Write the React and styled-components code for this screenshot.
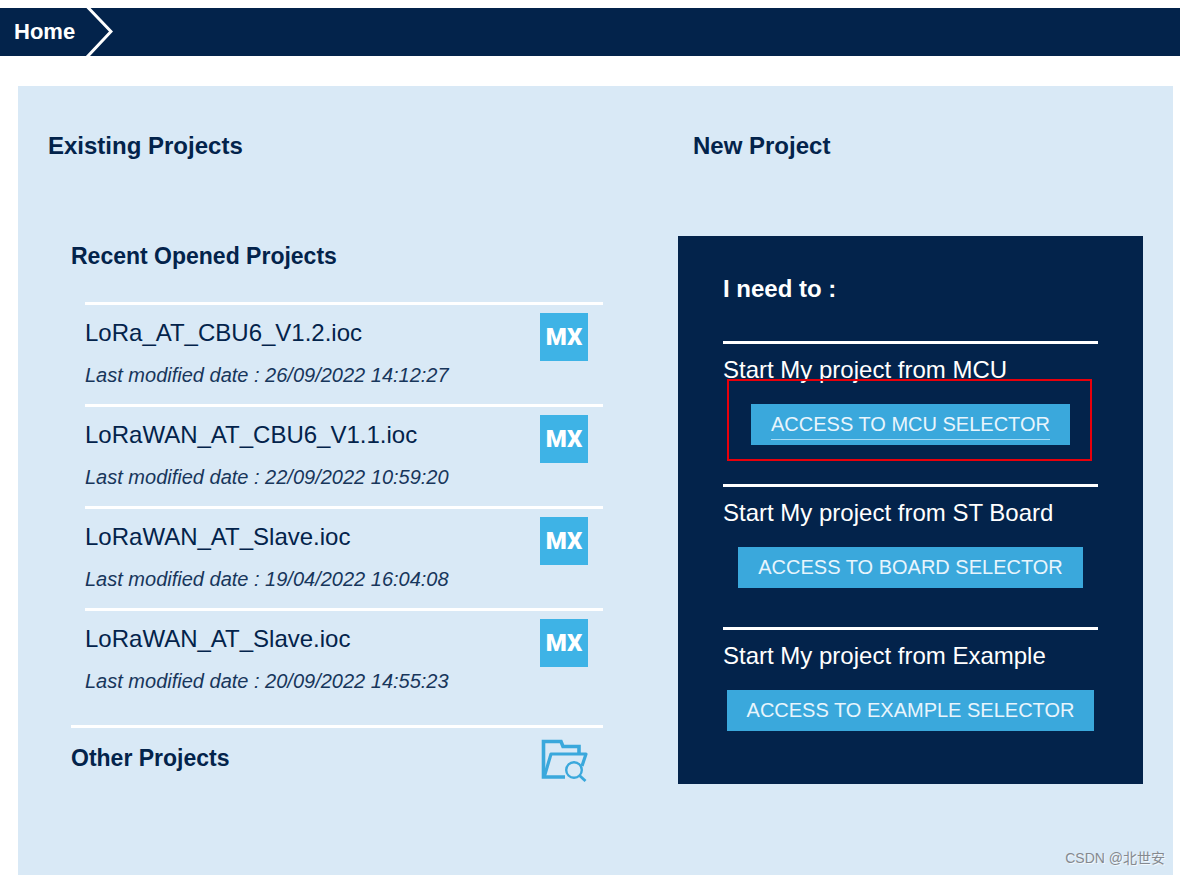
import React from 'react';
import styled, { createGlobalStyle } from 'styled-components';

const navy = '#03234b';
const sky = '#3aa8dc';
const pale = '#d9e9f6';

const GlobalStyle = createGlobalStyle`
    *{
        box-sizing:border-box;
    }
    body{
        margin:0;
        background:white;
        color:${navy};
        font-family:"Liberation Sans", Arial, sans-serif;
        font-size:24px;
    }
    h1, h2, h3, p, ul{
        margin:0;
        padding:0;
        font-size:inherit;
    }
`

const Page = styled.div`
    position:relative;
    min-height:100vh;
    display:flex;
    flex-direction:column;
    padding-top:8px;
`

const TopBar = styled.nav`
    display:flex;
    align-items:center;
    height:48px;
    padding-left:14px;
    gap:10px;
    background:${navy};
    svg{
        display:block;
    }
`

const HomeLink = styled.a`
    color:white;
    font-size:22px;
    font-weight:bold;
    text-decoration:none;
`

const Panel = styled.main`
    flex:1;
    display:grid;
    grid-template-columns:555fr 465fr;
    column-gap:75px;
    align-items:start;
    margin:30px 7px 0 18px;
    padding:46px 30px 60px;
    background:${pale};
`

const ColumnTitle = styled.h1`
    padding-left:${props => props.$indent ? '15px' : '0'};
    margin-bottom:${props => props.$indent ? '76px' : '82px'};
    line-height:28px;
`

const Recent = styled.div`
    padding-left:23px;
`

const SubTitle = styled.h2`
    font-size:23px;
    line-height:28px;
`

const ProjectList = styled.ul`
    list-style:none;
    margin:32px 0 0 14px;
`

const ProjectItem = styled.li`
    display:flex;
    justify-content:space-between;
    align-items:flex-start;
    height:102px;
    padding:8px 15px 0 0;
    border-top:3px solid white;
`

const ProjectText = styled.div`
    padding-top:5px;
`

const ProjectName = styled.h3`
    font-weight:normal;
    line-height:30px;
`

const ProjectDate = styled.p`
    margin-top:15px;
    font-size:20px;
    line-height:24px;
    font-style:italic;
    opacity:0.9;
`

const OtherProjects = styled.div`
    display:flex;
    justify-content:space-between;
    align-items:flex-start;
    margin-top:15px;
    padding:10px 15px 0 0;
    border-top:3px solid white;
    h2{
        padding-top:6px;
    }
`

const FolderButton = styled.button`
    padding:0;
    border:none;
    background:none;
    cursor:pointer;
    svg{
        display:block;
    }
`

const StartBox = styled.div`
    padding:39px 45px 0;
    background:${navy};
    color:white;
`

const StartTitle = styled.h2`
    line-height:28px;
    margin-bottom:38px;
`

const StartItem = styled.div`
    display:flex;
    flex-direction:column;
    align-items:center;
    height:${props => props.$last ? '157px' : '143px'};
    padding-top:12px;
    border-top:3px solid white;
    h3{
        align-self:flex-start;
        font-weight:normal;
        line-height:28px;
        white-space:nowrap;
    }
`

const ButtonHolder = styled.div`
    position:relative;
    margin-top:20px;
`

const SelectorButton = styled.button`
    display:block;
    height:41px;
    padding:0 20px;
    border:none;
    background:${sky};
    color:#e8f5fc;
    font-family:inherit;
    font-size:20px;
    line-height:30px;
    white-space:nowrap;
    cursor:pointer;
    span{
        display:block;
        border-bottom:1px solid ${props => props.$active ? '#a8dcf5' : 'transparent'};
    }
`

const Highlight = styled.div`
    position:absolute;
    inset:-25px -22px -16px -24px;
    border:2px solid #e8000b;
    pointer-events:none;
`

const Watermark = styled.div`
    position:absolute;
    right:15px;
    bottom:7px;
    color:#85898f;
    font-family:"Liberation Sans", "Noto Sans CJK SC", sans-serif;
    font-size:14px;
    line-height:20px;
    text-shadow:1px 1px 0 rgb(255, 255, 255, 0.7);
`

const Chevron = () => (
    <svg width="28" height="48" viewBox="0 0 28 48" fill="none" aria-hidden="true">
        <path d="M2.500 -1L26 23.500L2 49" stroke="white" strokeWidth="3" />
    </svg>
)

const MxBadge = styled.span`
    display:flex;
    align-items:center;
    justify-content:center;
    width:48px;
    height:48px;
    background:#3eb3e6;
    color:white;
    font-family:Roboto, "Liberation Sans", sans-serif;
    font-size:24px;
    font-weight:900;
    line-height:48px;
`

const FolderIcon = () => (
    <svg width="48" height="44" viewBox="0 0 48 44" fill="none" stroke={sky} aria-hidden="true">
        <path d="M25 39H3.500V3.500H21L23 8.500H39V15" strokeWidth="3.600" />
        <path d="M4.500 38L11 16H46L42 28" strokeWidth="3.200" strokeLinejoin="round" />
        <circle cx="34" cy="32" r="7.800" strokeWidth="2.400" />
        <path d="M39.500 37.500L45.500 43" strokeWidth="2.800" />
    </svg>
)

const projects = [
    { name: 'LoRa_AT_CBU6_V1.2.ioc', date: '26/09/2022 14:12:27' },
    { name: 'LoRaWAN_AT_CBU6_V1.1.ioc', date: '22/09/2022 10:59:20' },
    { name: 'LoRaWAN_AT_Slave.ioc', date: '19/04/2022 16:04:08' },
    { name: 'LoRaWAN_AT_Slave.ioc', date: '20/09/2022 14:55:23' },
];

const starters = [
    { title: 'Start My project from MCU', label: 'ACCESS TO MCU SELECTOR', active: true },
    { title: 'Start My project from ST Board', label: 'ACCESS TO BOARD SELECTOR' },
    { title: 'Start My project from Example', label: 'ACCESS TO EXAMPLE SELECTOR' },
];

const App = () => {
    return (
        <Page>
            <GlobalStyle />
            <TopBar>
                <HomeLink href="#home">Home</HomeLink>
                <Chevron />
            </TopBar>

            <Panel>
                <section>
                    <ColumnTitle>Existing Projects</ColumnTitle>
                    <Recent>
                        <SubTitle>Recent Opened Projects</SubTitle>
                        <ProjectList>
                            {projects.map((p, i) => (
                                <ProjectItem key={i}>
                                    <ProjectText>
                                        <ProjectName>{p.name}</ProjectName>
                                        <ProjectDate>Last modified date : {p.date}</ProjectDate>
                                    </ProjectText>
                                    <MxBadge>MX</MxBadge>
                                </ProjectItem>
                            ))}
                        </ProjectList>
                        <OtherProjects>
                            <SubTitle>Other Projects</SubTitle>
                            <FolderButton type="button" aria-label="Other Projects">
                                <FolderIcon />
                            </FolderButton>
                        </OtherProjects>
                    </Recent>
                </section>

                <section>
                    <ColumnTitle $indent>New Project</ColumnTitle>
                    <StartBox>
                        <StartTitle>I need to :</StartTitle>
                        {starters.map((s, i) => (
                            <StartItem key={s.label} $last={i === starters.length - 1}>
                                <h3>{s.title}</h3>
                                <ButtonHolder>
                                    <SelectorButton type="button" $active={s.active}>
                                        <span>{s.label}</span>
                                    </SelectorButton>
                                    {s.active ? <Highlight /> : ""}
                                </ButtonHolder>
                            </StartItem>
                        ))}
                    </StartBox>
                </section>
            </Panel>
            <Watermark>CSDN @北世安</Watermark>
        </Page>
    )
}

export default App;
